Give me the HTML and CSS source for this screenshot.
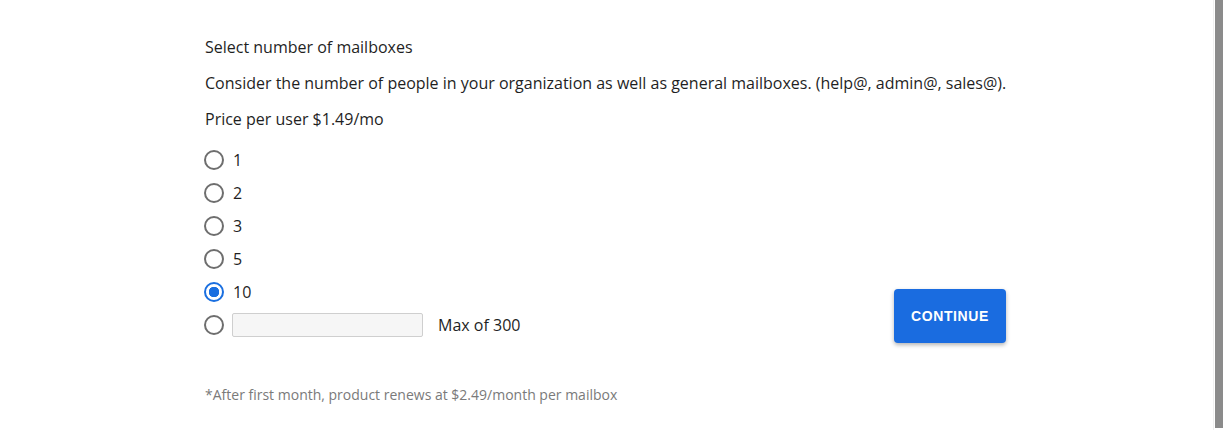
FILE: index.html
```html
<!DOCTYPE html>
<html lang="en">
<head>
<meta charset="utf-8">
<title>Select number of mailboxes</title>
<link rel="stylesheet" href="styles.css">
</head>
<body>
<main class="plan">
  <p class="plan-line">Select number of mailboxes</p>
  <p class="plan-line">Consider the number of people in your organization as well as general mailboxes. (help@, admin@, sales@).</p>
  <p class="plan-line">Price per user $1.49/mo</p>

  <div class="plan-body">
    <form class="choices">
      <label class="choice"><input type="radio" name="count" class="radio"><span>1</span></label>
      <label class="choice"><input type="radio" name="count" class="radio"><span>2</span></label>
      <label class="choice"><input type="radio" name="count" class="radio"><span>3</span></label>
      <label class="choice"><input type="radio" name="count" class="radio"><span>5</span></label>
      <label class="choice"><input type="radio" name="count" class="radio" checked><span>10</span></label>
      <div class="choice choice-custom">
        <input type="radio" name="count" class="radio">
        <input type="text" class="count-field" aria-label="Number of mailboxes">
        <span class="count-hint">Max of 300</span>
      </div>
    </form>
    <button type="button" class="continue">CONTINUE</button>
  </div>

  <p class="footnote">*After first month, product renews at $2.49/month per mailbox</p>
</main>
<div class="scrollbar"><div class="scrollbar-thumb"></div></div>
</body>
</html>
```

FILE: styles.css
```css
html, body {
  margin: 0;
  padding: 0;
  background: #ffffff;
}

body {
  font-family: "Open Sans", "Noto Sans", sans-serif;
  font-size: 16px;
  color: #1f1f1f;
  margin-right: 12px;
  height: 430px;
  overflow: hidden;
}

.plan {
  width: 805px;
  margin: 0 auto;
  padding-top: 35px;
}

.plan-line {
  margin: 0 0 12px 1px;
  line-height: 24px;
}

.plan-body {
  display: flex;
  justify-content: space-between;
  align-items: flex-end;
}

.choices {
  display: flex;
  flex-direction: column;
  margin: 0;
}

.choice {
  display: flex;
  align-items: center;
  height: 33px;
  gap: 9px;
  line-height: 24px;
}

.choice-custom {
  height: 34px;
}

.radio {
  appearance: none;
  -webkit-appearance: none;
  margin: 0;
  width: 20px;
  height: 20px;
  border: 2px solid #6e6e6e;
  border-radius: 50%;
  box-sizing: border-box;
  background: #fff;
  flex: none;
}

.radio:checked {
  border-color: #1a6fe0;
  background: radial-gradient(circle, #1a6fe0 0 5px, #fff 5.5px);
}

.count-field {
  width: 191px;
  height: 24px;
  box-sizing: border-box;
  margin: 0 6px 0 -1px;
  border: 1px solid #cfcfcf;
  border-radius: 2px;
  background: #f6f6f6;
  font: inherit;
}

.count-hint {
  color: #1f1f1f;
}

.continue {
  width: 112px;
  height: 54px;
  margin: 0 3px -1px 0;
  border: none;
  border-radius: 4px;
  background: #1a6ce0;
  color: #ffffff;
  font-family: "Liberation Sans", Arial, sans-serif;
  font-weight: 700;
  font-size: 14px;
  letter-spacing: 0.6px;
  box-shadow: 0 2px 4px rgba(0, 0, 0, 0.3);
  cursor: pointer;
}

.footnote {
  margin: 43px 0 0 1px;
  font-size: 14px;
  line-height: 20px;
  color: #7a7a7a;
}

.scrollbar {
  position: fixed;
  top: 0;
  right: 0;
  width: 12px;
  height: 430px;
  background: #ffffff;
  border-left: 1px solid #f0f0f0;
  box-sizing: border-box;
}

.scrollbar-thumb {
  margin-left: 1px;
  width: 8px;
  height: 428px;
  background: #8b8b8b;
}
```
